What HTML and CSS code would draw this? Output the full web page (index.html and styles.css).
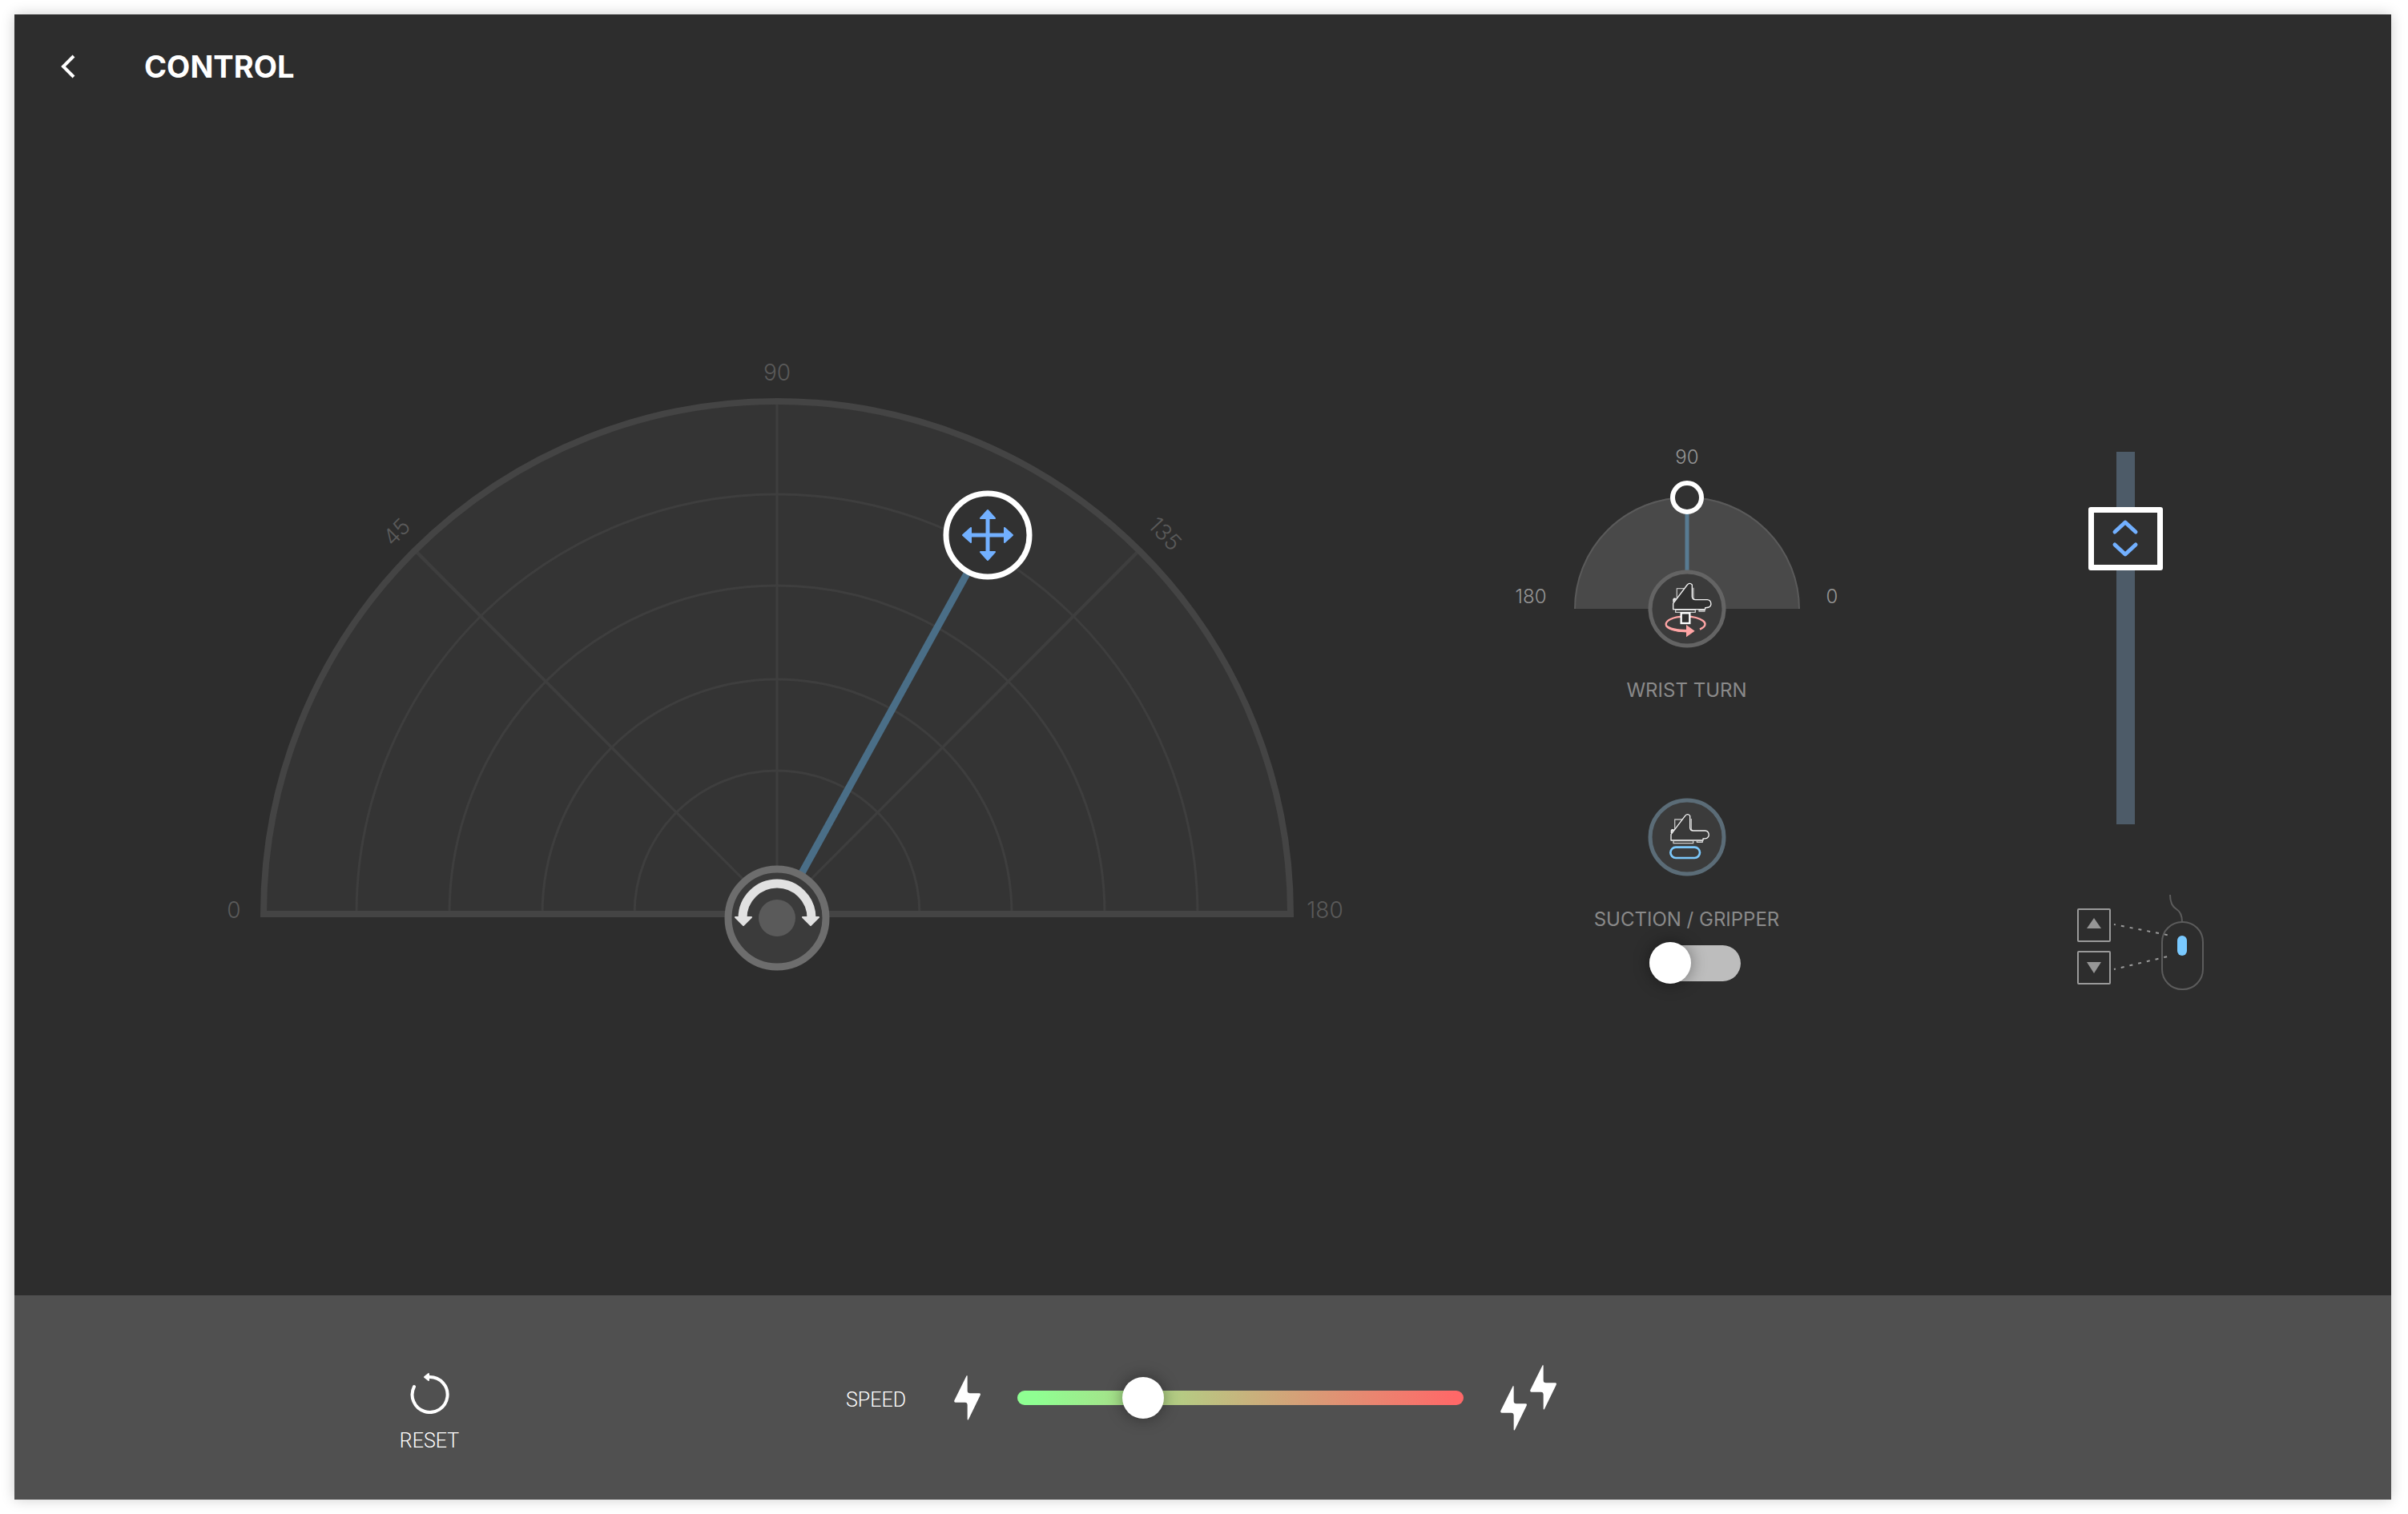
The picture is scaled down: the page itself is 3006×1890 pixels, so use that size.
FILE: index.html
```html
<!DOCTYPE html>
<html lang="en">
<head>
<meta charset="utf-8">
<meta name="viewport" content="width=device-width, initial-scale=1">
<title>Control</title>
<link rel="stylesheet" href="styles.css">
</head>
<body>
<svg class="defs" aria-hidden="true">
  <defs>
    <symbol id="bolt" viewBox="0 0 99 168" overflow="visible">
      <path d="M47 1 L1 94 Q-1 101 5 101 H41 Q50 101 50 111 V164 Q51 169 54 165 L98 74 Q101 67 94 67 H60 Q50 67 50 57 V3 Q49 -1 47 1Z"/>
    </symbol>
    <symbol id="arm" viewBox="0 0 150 115" overflow="visible">
      <g stroke="#f4f4f4" stroke-width="4" stroke-linejoin="round">
        <path d="M17 66 V21 H48 M79 18 V56 Q80 62 84 63" fill="none" stroke="#bdbdbd"/>
        <path d="M4 72 V62 Q6 57 14 60" fill="#dddddd"/>
        <path d="M3 99 V77 L56 7 Q65 -3 74 7 V52 Q75 63 86 63 H131 A15 15 0 0 1 137 91 Q130 93 123 93 V99 Z"/>
        <path d="M12 101 H86 V110 H12 Z M100 101 H121 V106 H100 Z" stroke="#cfcfcf"/>
      </g>
    </symbol>
  </defs>
</svg>

<div class="panel">
  <header class="header">
    <button class="back" type="button" aria-label="Back">
      <svg width="20" height="30" viewBox="0 0 20 30"><path d="M18 2 L5 15 L18 28" fill="none" stroke="#fff" stroke-width="4"/></svg>
    </button>
    <h1 class="title">CONTROL</h1>
  </header>

  <main class="stage">
    <svg class="dial" viewBox="270 440 1420 800" role="img" aria-label="Base rotation and reach">
      <path d="M329 1142 A641 640 0 0 1 1611 1142 Z" fill="#343434"/>
      <g class="dial-grid">
        <path d="M445 1142 A525 524 0 0 1 1495 1142"/>
        <path d="M561 1142 A409 410 0 0 1 1379 1142"/>
        <path d="M677 1142 A293 293 0 0 1 1263 1142"/>
        <path d="M792 1142 A178 179 0 0 1 1148 1142"/>
        <path d="M970 506 V1142"/>
      </g>
      <path d="M519 692 L522 689 L971 1140 L969 1142 Z M1421 692 L1418 689 L969 1140 L971 1142 Z" fill="#3e3e3e"/>
      <path d="M329 1142 A641 640 0 0 1 1611 1142 Z" fill="none" stroke="#444" stroke-width="8"/>
      <g class="dial-label">
        <text x="970" y="476">90</text>
        <text x="292" y="1147">0</text>
        <text x="1654" y="1147">180</text>
        <text transform="translate(502 672) rotate(-45)">45</text>
        <text transform="translate(1447 674) rotate(47)">135</text>
      </g>
      <path d="M970 1147 L1233 670" stroke="#4a6e87" stroke-width="9"/>
      <circle cx="970" cy="1147" r="61" fill="#3b3b3b" stroke="#6d6d6d" stroke-width="9"/>
      <circle cx="970" cy="1147" r="23" fill="#5a5a5a"/>
      <path d="M927 1147 A43 43 0 0 1 1013 1147" fill="none" stroke="#e1e1e1" stroke-width="11"/>
      <path d="M918 1146 H938 L928 1156 Z M1002 1146 H1022 L1012 1156 Z" fill="#e1e1e1" stroke="#e1e1e1" stroke-width="2" stroke-linejoin="round"/>
      <circle cx="1233" cy="669" r="52" fill="#313131" stroke="#fff" stroke-width="7"/>
      <path d="M1208 669 H1258 M1233 644 V694" stroke="#72b0ff" stroke-width="5"/>
      <path d="M1202 669 L1212 660 V678 Z M1264 669 L1254 660 V678 Z M1233 638 L1224 648 H1242 Z M1233 700 L1224 690 H1242 Z" fill="#72b0ff" stroke="#72b0ff" stroke-width="2" stroke-linejoin="round"/>
    </svg>

    <section class="tools">
      <svg class="wrist" viewBox="1886 550 440 270" role="img" aria-label="Wrist angle">
        <path d="M1966 760 A140 140 0 0 1 2246 760 Z" fill="#494949"/>
        <path d="M1966 760 A140 139 0 0 1 2246 760" fill="none" stroke="#5a5a5a" stroke-width="2"/>
        <path d="M2106 621 V760" stroke="#587b92" stroke-width="5"/>
        <circle cx="2106" cy="621" r="18" fill="#313131" stroke="#fff" stroke-width="6"/>
        <circle cx="2106" cy="760" r="46" fill="#3b3b3b" stroke="#646464" stroke-width="5"/>
        <g class="wrist-label">
          <text x="2106" y="579">90</text>
          <text x="1911" y="753">180</text>
          <text x="2287" y="753">0</text>
        </g>
        <g transform="translate(2040 700) scale(.3333)">
          <path d="M246 257 C292 236 250 209 192 209 C140 209 119 226 119 238 C119 254 156 266 200 264" fill="none" stroke="#ffa5a5" stroke-width="7"/>
          <path d="M118 244 C128 260 160 268 200 268 L200 258 C160 258 134 252 118 238Z" fill="#ffa5a5"/>
          <path d="M195 240 L227 263 L195 286Z" fill="#ffa5a5"/>
          <use href="#arm" x="143" y="83" width="150" height="115" fill="#303030"/>
          <rect x="176" y="196" width="32" height="38" fill="#303030" stroke="#fff" stroke-width="7"/>
        </g>
      </svg>
      <h2 class="caption wrist-caption">WRIST TURN</h2>
      <svg class="suction" viewBox="0 0 98 98" aria-hidden="true">
        <circle cx="49" cy="49" r="46" fill="#3b3b3b" stroke="#5b6c77" stroke-width="5"/>
        <g transform="translate(49 49) scale(.3333)">
          <use href="#arm" x="-63" y="-87" width="150" height="115" fill="#393939"/>
          <rect x="-62" y="38" width="110" height="40" rx="20" fill="none" stroke="#7cc8fb" stroke-width="8"/>
        </g>
      </svg>
      <label class="caption suction-caption" for="suction">SUCTION / GRIPPER</label>
      <input class="toggle" id="suction" type="checkbox" role="switch">
    </section>

    <section class="lift">
      <input class="height-slider" type="range" min="0" max="100" value="82" aria-label="Height">
      <svg class="mouse" viewBox="0 0 160 128" role="img" aria-label="Scroll the mouse wheel to move up or down">
        <g fill="none" stroke="#9a9a9a" stroke-width="2">
          <rect x="1" y="27" width="40" height="40" rx="1"/>
          <rect x="1" y="80" width="40" height="40" rx="1"/>
          <path d="M46 46 L117 60 M46 102 L117 85" stroke-dasharray="4 7" stroke-dashoffset="2"/>
        </g>
        <path d="M12 51 L21 38 L30 51 Z M12 93 L21 107 L30 93 Z" fill="#969696"/>
        <g fill="none" stroke="#5c5c5c" stroke-width="2">
          <rect x="106" y="43" width="51" height="84" rx="25"/>
          <path d="M116 9 C116 18 119 24 124 27 C129 30 131 36 131 43"/>
        </g>
        <rect x="125" y="60" width="12" height="25" rx="6" fill="#79c9ff"/>
      </svg>
    </section>
  </main>

  <footer class="footer">
    <button class="reset" type="button">
      <svg width="52" height="52" viewBox="0 0 52 52">
        <path d="M7 18 A22 22 0 1 0 26 6" fill="none" stroke="#fff" stroke-width="4" stroke-linecap="round"/>
        <path d="M20 6 L25 2 V10 Z" fill="#fff" stroke="#fff" stroke-width="2" stroke-linejoin="round"/>
      </svg>
      RESET
    </button>
    <div class="speed">
      <label class="speed-label" for="speed">SPEED</label>
      <svg class="slow" viewBox="0 0 33 56" fill="#fff" aria-hidden="true"><use href="#bolt" width="33" height="56"/></svg>
      <input class="speed-slider" id="speed" type="range" min="0" max="100" value="26">
      <svg class="fast" viewBox="0 0 70 84" fill="#fff" aria-hidden="true">
        <use href="#bolt" y="27" width="33" height="56"/>
        <use href="#bolt" x="37" y="1" width="33" height="56"/>
      </svg>
    </div>
  </footer>
</div>
</body>
</html>
```
FILE: styles.css
```css
* {
  box-sizing: border-box;
}

body {
  margin: 0;
  min-height: 100vh;
  padding: 18px 21px 18px 18px;
  display: flex;
  background: #fff;
  color: #fff;
  font-family: Inter, "Liberation Sans", sans-serif;
}

button {
  border: 0;
  padding: 0;
  background: none;
  color: inherit;
  font: inherit;
  cursor: pointer;
}

svg {
  display: block;
}

.defs {
  position: absolute;
  width: 0;
  height: 0;
}

.panel {
  flex: 1;
  display: flex;
  flex-direction: column;
  background: #2d2d2d;
  box-shadow: 0 0 16px rgba(0, 0, 0, 0.2);
}

/* Header */

.header {
  display: flex;
  align-items: center;
  gap: 86px;
  height: 130px;
  padding-left: 56px;
}

.title {
  margin: 0;
  font-size: 38px;
  line-height: 44px;
  font-weight: 700;
}

/* Stage */

.stage {
  flex: 1;
  display: flex;
  align-items: center;
  justify-content: space-between;
  padding: 0 200px 88px 252px;
}

.dial {
  width: 1420px;
  height: 800px;
}

.dial-grid {
  fill: none;
  stroke: #3e3e3e;
  stroke-width: 3px;
}

.dial-label {
  fill: #5a5a5a;
  font-size: 28px;
  font-weight: 300;
  text-anchor: middle;
}

.tools,
.lift {
  height: 800px;
  display: flex;
  flex-direction: column;
  align-items: center;
  justify-content: flex-end;
}

.tools {
  width: 440px;
  padding-bottom: 11px;
}

.wrist {
  width: 440px;
  height: 270px;
}

.wrist-label {
  fill: #969696;
  font-size: 24px;
  font-weight: 300;
  text-anchor: middle;
}

.caption {
  margin: 0;
  color: #8a8a8a;
  font-size: 24px;
  line-height: 32px;
  font-weight: 400;
}

.wrist-caption {
  margin: 26px 0 118px;
}

.suction {
  width: 98px;
  height: 98px;
}

.suction-caption {
  margin: 38px 0 13px;
}

.toggle {
  appearance: none;
  display: flex;
  align-items: center;
  width: 114px;
  height: 45px;
  margin: 3px 0 3px 20px;
  border-radius: 24px;
  background: #bdbdbd;
}

.toggle::before {
  content: "";
  flex: none;
  width: 52px;
  height: 52px;
  border-radius: 50%;
  background: #fff;
  box-shadow: 0 0 20px rgba(0, 0, 0, 0.4);
}

.toggle:checked {
  justify-content: flex-end;
}

.lift {
  width: 264px;
  gap: 79px;
  padding-bottom: 3px;
}

.height-slider {
  appearance: none;
  writing-mode: vertical-lr;
  direction: rtl;
  width: 93px;
  height: 465px;
  margin: 0;
  background: linear-gradient(#4d5b68, #4d5b68) center / 23px 100% no-repeat;
}

.height-slider::-webkit-slider-thumb {
  appearance: none;
  width: 93px;
  height: 79px;
  border: 7px solid #fff;
  border-radius: 3px;
  background: #303030 url("data:image/svg+xml,%3Csvg xmlns='http://www.w3.org/2000/svg' width='34' height='48' viewBox='0 0 34 48' fill='none' stroke='%2372b0ff' stroke-width='5' stroke-linecap='round' stroke-linejoin='round'%3E%3Cpath d='M4 16 17 4 30 16M4 32 17 44 30 32'/%3E%3C/svg%3E") center no-repeat;
}

.mouse {
  width: 160px;
  height: 128px;
  align-self: flex-end;
  margin-right: 32px;
}

/* Footer */

.footer {
  display: flex;
  align-items: center;
  gap: 470px;
  height: 255px;
  padding-left: 468px;
  background: #505050;
  font-family: Roboto, "Liberation Sans", sans-serif;
  font-size: 25px;
  line-height: 32px;
  font-weight: 300;
}

.reset {
  display: flex;
  flex-direction: column;
  align-items: center;
  gap: 18px;
  width: 100px;
  margin-top: 38px;
}

.speed {
  display: flex;
  align-items: center;
}

.speed-label {
  padding-top: 6px;
  margin-right: 60px;
}

.slow {
  width: 33px;
  height: 56px;
}

.speed-slider {
  appearance: none;
  width: 557px;
  height: 18px;
  margin: 0 46px;
  border-radius: 9px;
  background: linear-gradient(90deg, #8fff92 4%, #ff6868 98%);
}

.speed-slider::-webkit-slider-thumb {
  appearance: none;
  width: 52px;
  height: 52px;
  border-radius: 50%;
  background: #fff;
  box-shadow: 0 0 20px rgba(0, 0, 0, 0.4);
}

.fast {
  width: 70px;
  height: 84px;
}
```
